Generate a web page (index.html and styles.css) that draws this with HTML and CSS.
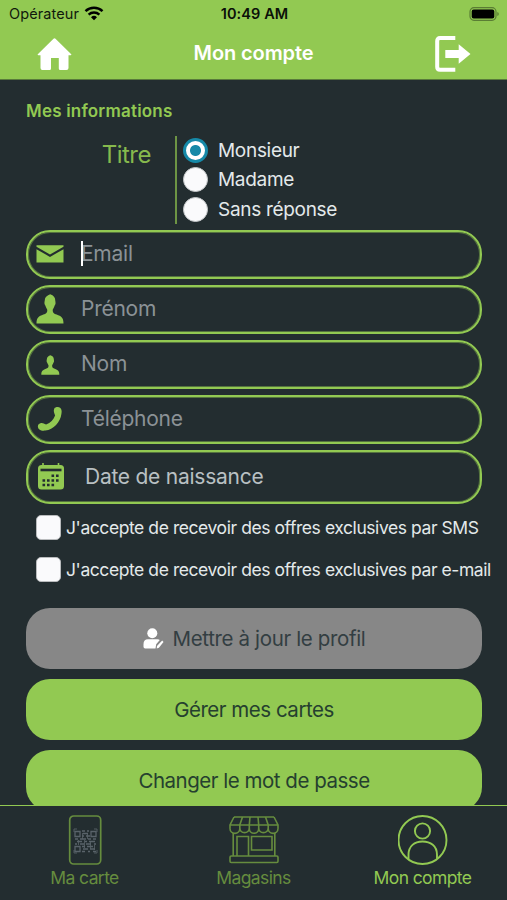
FILE: index.html
```html
<!DOCTYPE html>
<html lang="fr">
<head>
    <meta charset="UTF-8">
    <meta name="viewport" content="width=device-width, initial-scale=1.0">
    <title>Mon compte</title>
    <link rel="stylesheet" href="styles.css">
</head>
<body>
    <div class="app">
        <header class="header">
            <div class="status-bar">
                <div class="carrier">
                    <span>Opérateur</span>
                    <svg width="20" height="15" viewBox="0 0 20 15">
                        <path d="M1.5 5.2a12.4 12.4 0 0 1 17 0" fill="none" stroke="#000" stroke-width="2.5"/>
                        <path d="M4.6 8.6a8 8 0 0 1 10.8 0" fill="none" stroke="#000" stroke-width="2.4"/>
                        <path d="M10 14.2l-3-3a4.3 4.3 0 0 1 6 0z"/>
                    </svg>
                </div>
                <div class="clock">10:49 AM</div>
                <div class="battery">
                    <svg width="31" height="14" viewBox="0 0 31 14">
                        <rect x="1" y="0.7" width="26" height="12.6" rx="4" fill="none" stroke="#5a7d34" stroke-width="1.2"/>
                        <rect x="2.7" y="2.5" width="22.6" height="9" rx="2" fill="#000"/>
                        <path d="M28.3 5v4q1.5-.6 1.5-2t-1.5-2z" fill="#5a7d34"/>
                    </svg>
                </div>
            </div>
            <nav class="nav-bar">
                <button class="nav-btn">
                    <svg width="36" height="33" viewBox="0 0 36 33">
                        <path d="M17.500 .8q1-.9 2 0l15.500 15.200q1 1.200-.5 1.300H32.500V30q0 2-2 2h-6.200q-1.500 0-1.500-1.500V20h-7.800v10.500q0 1.500-1.500 1.500H6.500q-2 0-2-2V17.300H2.500q-1.500-.1-.5-1.300z" fill="#fff"/>
                    </svg>
                </button>
                <h1 class="page-title">Mon compte</h1>
                <button class="nav-btn">
                    <svg width="36" height="36" viewBox="0 0 36 36">
                        <path d="M20.300 2.100H5Q2.200 2.100 2.200 5v26q0 2.700 2.800 2.700h15.300" fill="none" stroke="#fff" stroke-width="4"/>
                        <path d="M10.300 14H23.700V8.200L35.500 17.900 23.700 27.700V22H10.300z" fill="#fff"/>
                    </svg>
                </button>
            </nav>
        </header>

        <main class="content">
            <h2 class="section-title">Mes informations</h2>

            <div class="gender">
                <div class="gender-label">Titre</div>
                <div class="gender-options">
                    <label class="radio-row"><span class="radio checked"></span><span>Monsieur</span></label>
                    <label class="radio-row"><span class="radio"></span><span>Madame</span></label>
                    <label class="radio-row"><span class="radio"></span><span>Sans réponse</span></label>
                </div>
            </div>

            <div class="fields">
                <div class="field">
                    <svg width="28" height="30" viewBox="0 0 28 30">
                        <path d="M.5 6.200h27v1.600L14 15.600.5 7.800zM.5 10.200l13.500 7.700 13.500-7.700V23.500H.5z" fill="#92c952"/>
                    </svg>
                    <span class="caret"></span>
                    <span class="placeholder">Email</span>
                </div>
                <div class="field">
                    <svg width="28" height="30" viewBox="-.5 0 28 30">
                        <path d="M13.700.3c3.500 1.300 5 3.200 5 5.700 0 1 .5 1.800.3 3.800-.2 1.300-.9 1.400-1.200 2.700-.4 1.500-1.600 2.400-1.600 3.700 0 2.800 1.300 3.400 3.900 4.400 4.700 1.900 6.900 3 6.900 8.900H0c0-5.900 2.200-7 6.900-8.900 2.600-1 3.900-1.600 3.900-4.400 0-1.300-1.200-2.200-1.600-3.700-.3-1.300-1-1.400-1.200-2.700-.2-2 .3-2.800.3-3.800 0-2.700 2.500-4.700 5.400-5.700z" fill="#92c952"/>
                    </svg>
                    <span class="placeholder">Prénom</span>
                </div>
                <div class="field">
                    <svg width="28" height="30" viewBox="-8 -9 42 45">
                        <path d="M13.700.3c3.500 1.300 5 3.200 5 5.700 0 1 .5 1.800.3 3.800-.2 1.300-.9 1.400-1.200 2.700-.4 1.500-1.600 2.400-1.600 3.700 0 2.800 1.300 3.400 3.900 4.400 4.700 1.900 6.900 3 6.900 8.900H0c0-5.900 2.200-7 6.900-8.900 2.600-1 3.900-1.600 3.900-4.400 0-1.300-1.200-2.200-1.600-3.700-.3-1.300-1-1.400-1.200-2.700-.2-2 .3-2.800.3-3.800 0-2.700 2.500-4.700 5.400-5.700z" fill="#92c952"/>
                    </svg>
                    <span class="placeholder">Nom</span>
                </div>
                <div class="field">
                    <svg width="28" height="30" viewBox="0 0 28 30">
                        <path d="M18.300 4.500c1-1.700 4.400-2.100 6.100-.5 1.700 1.700 1.300 4.200 1 6-.9 8-7.900 15.800-16 16.600-2.600.4-5.600 0-7-2.200-1.200-2.500-.3-4.700 2-5.200 2.600-.5 3.300.5 5.700 1.200 4.600-1.800 7.300-4.800 9-9-.8-2.400-2-4.500-.8-6.900z" fill="#92c952"/>
                    </svg>
                    <span class="placeholder">Téléphone</span>
                </div>
                <div class="field date-field">
                    <svg width="28" height="30" viewBox="0 0 28 30">
                        <rect x="2" y="3" width="26" height="24.500" rx="3.500" fill="#92c952"/>
                        <path d="M7 1v4M22.500 1v4" stroke="#92c952" stroke-width="1.600"/>
                        <path d="M4.500 8h21" stroke="#232d30" stroke-width="2.600"/>
                        <path d="M15.500 13.800h8M6.500 18.500h17M6.500 23h12.500" stroke="#232d30" stroke-width="2.600" stroke-dasharray="2.600 1.900"/>
                    </svg>
                    <span class="placeholder">Date de naissance</span>
                </div>
            </div>

            <div class="consents">
                <label class="consent"><span class="checkbox"></span><span>J'accepte de recevoir des offres exclusives par SMS</span></label>
                <label class="consent"><span class="checkbox"></span><span>J'accepte de recevoir des offres exclusives par e-mail</span></label>
            </div>

            <div class="actions">
                <button class="btn btn-disabled">
                    <svg width="21" height="21" viewBox="0 0 21 21">
                        <circle cx="9.300" cy="5.200" r="5" fill="#fff"/>
                        <path d="M5 11.200h9.500q1.500 0 2.300.8l-3.600 4.300-.7 4.300H2.200q-1.700 0-1.700-1.800v-2.500q0-5.100 4.500-5.100z" fill="#fff"/>
                        <path d="M19.200 12.400l1.300 1.500-4.600 5.900-2.200.8.300-2.600z" fill="#fff"/>
                    </svg>
                    <span>Mettre à jour le profil</span>
                </button>
                <button class="btn">Gérer mes cartes</button>
                <button class="btn">Changer le mot de passe</button>
            </div>
        </main>

        <footer class="tab-bar">
            <div class="tab">
                <svg width="50" height="50" viewBox="0 0 50 50">
                    <rect x="9.700" y="1" width="31" height="48" rx="4" fill="none" stroke="#668c3e" stroke-width="1.700"/>
                    <path d="M14 17v-3h3M34 14h3v3M37 35v3h-3M17 38h-3v-3" fill="none" stroke="#535d61" stroke-width="1"/>
                    <g fill="none" stroke="#59636a" stroke-width="1.300">
                        <path d="M15 16.500h5v5h-5zM31 16.500h5v5h-5zM15 31.500h5v5h-5z"/>
                        <path d="M22 16h3m2 0h2M23 18.500h5M22 21h2m2 0h4M15 24h3m2 0h6m2 0h3m2 0h3M17 26.500h5m3 0h2m2 0h6M15 29h2m3 0h4m2 0h5m3 0h2M22 31.500h3m2 0h6M23 34h5m2 0h5M22 36.500h3m3 0h2m3 0h3"/>
                        <path d="M22.500 18v6M27.500 19v5M24.500 25v8M30.500 27v7M34.500 30v5M18.500 25v5" stroke-width=".8"/>
                    </g>
                </svg>
                <span>Ma carte</span>
            </div>
            <div class="tab">
                <svg width="50" height="50" viewBox="0 0 50 50" fill="none" stroke="#668c3e" stroke-width="1.600">
                    <path d="M5 2h40M5 2L1 10v3.700M45 2l4 8v3.700M1 10h48"/>
                    <path d="M13.500 2l-2.700 8v4M21 2L20.300 10v4M29 2l.7 8v4M36.500 2l2.700 8v4"/>
                    <path d="M1 13.500a4.900 4.900 0 0 0 9.800 0 4.800 4.800 0 0 0 9.500 0 4.700 4.700 0 0 0 9.400 0 4.800 4.800 0 0 0 9.500 0 4.900 4.900 0 0 0 9.800 0"/>
                    <path d="M4.200 18v23M45.800 18v23M8 41V21.500h11.500V41M22.500 21.500H43V35H22.500z"/>
                    <rect x="1" y="41" width="48" height="6.500" rx="1.200"/>
                </svg>
                <span>Magasins</span>
            </div>
            <div class="tab active">
                <svg width="50" height="50" viewBox="0 0 50 50" fill="none" stroke="#92c952" stroke-width="1.900">
                    <circle cx="24.500" cy="25" r="24"/>
                    <circle cx="24.500" cy="16" r="7.600"/>
                    <path d="M10.500 44v-4.300C10.500 31 16.500 26.500 24.500 26.500s14.500 4.500 14.500 13.200v4"/>
                </svg>
                <span>Mon compte</span>
            </div>
        </footer>
    </div>
</body>
</html>
```
FILE: styles.css
```css
* {
    box-sizing: border-box;
}

body {
    margin: 0;
    background-color: #232d30;
    font-family: Inter, "Liberation Sans", sans-serif;
    color: #e3e9ea;
}

h1, h2 {
    margin: 0;
}

button {
    border: none;
    padding: 0;
    font-family: inherit;
    cursor: pointer;
}

svg {
    display: block;
    flex-shrink: 0;
}

.app {
    height: 900px;
    display: flex;
    flex-direction: column;
    overflow: hidden;
}

/* header */
.header {
    height: 80px;
    flex-shrink: 0;
    background-color: #92c952;
    border-bottom: 1px solid #597b3b;
}

.status-bar {
    display: grid;
    grid-template-columns: 1fr auto 1fr;
    align-items: center;
    height: 27px;
    padding: 0 7px 0 9px;
    color: #10180c;
}

.carrier {
    display: flex;
    align-items: center;
    gap: 5px;
    font-size: 14.5px;
    letter-spacing: 0.1px;
}

.clock {
    font-size: 14.5px;
    font-weight: 600;
    letter-spacing: 0.1px;
    color: #0b1008;
}

.battery {
    display: flex;
    justify-content: flex-end;
}

.nav-bar {
    display: flex;
    align-items: center;
    justify-content: space-between;
    height: 52px;
    padding: 0 36px;
}

.nav-btn {
    padding-top: 2px;
    background-color: transparent;
}

.page-title {
    font-size: 20px;
    font-weight: 600;
    letter-spacing: -0.1px;
    color: #fff;
}

/* profile form */
.content {
    flex: 1;
    min-height: 0;
    overflow: hidden;
    padding: 20px 25px 0 26px;
}

.section-title {
    font-size: 17px;
    line-height: 22px;
    font-weight: 600;
    letter-spacing: 0.2px;
    color: #92c952;
}

.gender {
    display: flex;
    height: 88px;
    margin-top: 14px;
}

.gender-label {
    width: 151px;
    padding: 3px 24px 0 0;
    border-right: 2px solid #6d9444;
    font-size: 24px;
    line-height: 32px;
    letter-spacing: -0.5px;
    text-align: right;
    color: #86b94d;
}

.gender-options {
    padding-left: 6px;
}

.radio-row {
    display: flex;
    align-items: center;
    gap: 10px;
    height: 29.3px;
    font-size: 19px;
    line-height: 25px;
    letter-spacing: -0.3px;
}

.radio {
    width: 25px;
    height: 25px;
    border-radius: 50%;
    border: 1px solid #c4c7c9;
    background-color: #fafafc;
}

.radio.checked {
    border: 3px solid #1689a8;
    background: radial-gradient(circle, #1689a8 5px, #fff 6px);
}

.fields {
    display: flex;
    flex-direction: column;
    gap: 6px;
    margin-top: 6px;
}

.field {
    display: flex;
    align-items: center;
    height: 49px;
    padding: 0 0 2px 8px;
    border: 2px solid #92c952;
    border-radius: 24px;
    box-shadow: inset 0 0 0 1px rgba(146, 201, 82, 0.45);
    position: relative;
}

.date-field {
    height: 54px;
    padding-bottom: 0;
}

.placeholder {
    margin-left: 17px;
    font-size: 21px;
    line-height: 28px;
    letter-spacing: -0.25px;
    color: #8b9296;
}

.caret {
    position: absolute;
    left: 53px;
    top: 9px;
    width: 2px;
    height: 25px;
    background-color: #fff;
}

.date-field .placeholder {
    margin-left: 21px;
    color: #b9c0c3;
}

.consents {
    display: flex;
    flex-direction: column;
    gap: 17px;
    margin-top: 11px;
    padding-left: 10px;
}

.consent {
    display: flex;
    align-items: center;
    gap: 5px;
    height: 25px;
    font-size: 17.5px;
    letter-spacing: -0.43px;
    white-space: nowrap;
}

.checkbox {
    width: 25px;
    height: 25px;
    flex-shrink: 0;
    border: 1px solid #b9bbbd;
    border-radius: 5px;
    background-color: #fafafc;
}

.actions {
    display: flex;
    flex-direction: column;
    gap: 10px;
    margin-top: 26px;
}

.btn {
    display: flex;
    align-items: center;
    justify-content: center;
    gap: 9px;
    height: 61px;
    flex-shrink: 0;
    border-radius: 24px;
    background-color: #92c952;
    font-size: 20.5px;
    letter-spacing: -0.48px;
    color: #25402f;
}

.btn-disabled {
    background-color: #878787;
    letter-spacing: -0.35px;
    color: #333e42;
}

/* bottom tabs */
.tab-bar {
    display: grid;
    grid-template-columns: repeat(3, 1fr);
    height: 95px;
    flex-shrink: 0;
    padding-top: 9px;
    border-top: 1px solid #92c952;
}

.tab {
    display: flex;
    flex-direction: column;
    align-items: center;
    gap: 1px;
    font-size: 17.5px;
    line-height: 24px;
    letter-spacing: -0.6px;
    color: #668c3e;
}

.tab.active {
    color: #92c952;
}
```
